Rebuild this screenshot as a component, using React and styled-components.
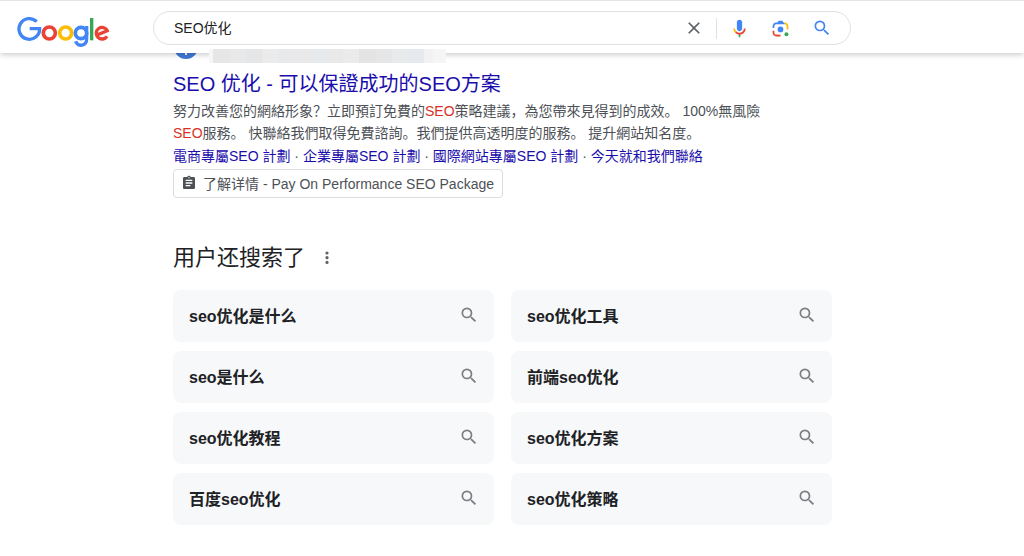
import React, { useState } from "react";
import styled, { createGlobalStyle } from "styled-components";

const GlobalStyle = createGlobalStyle`
  *, *::before, *::after { box-sizing: border-box; }
  body {
    margin: 0;
    background: #fff;
    color: #202124;
    font-family: "Liberation Sans", Arial, "Noto Sans CJK SC", sans-serif;
    font-size: 14px;
  }
  h2, h3, p { margin: 0; font-weight: 400; }
  a { color: #1a0dab; text-decoration: none; }
  a:hover { text-decoration: underline; }
  button { font: inherit; border: 0; padding: 0; background: none; cursor: pointer; }
  svg { display: block; }
`;

const Header = styled.header`
  position: relative;
  z-index: 1;
  display: flex;
  align-items: flex-start;
  height: 53px;
  padding: 10px 17px 0;
  background: #fff;
  border-top: 1px solid #e4e4e4;
  box-shadow: 0 1px 6px rgba(32, 33, 36, 0.28);
`;

const LogoLink = styled.a`
  flex: none;
  width: 136px;
  padding-top: 5px;
`;

const SearchBox = styled.form`
  display: flex;
  align-items: center;
  flex: 1;
  max-width: 698px;
  height: 34px;
  padding: 0 8px 0 20px;
  border: 1px solid #dfe1e5;
  border-radius: 17px;
`;

const SearchInput = styled.input`
  flex: 1;
  min-width: 0;
  height: 30px;
  padding: 0 0 2px;
  border: 0;
  outline: 0;
  background: none;
  color: #202124;
  font: inherit;
`;

const IconButton = styled.button`
  display: flex;
  align-items: center;
  justify-content: center;
  width: 41px;
  height: 32px;
  color: ${(p) => p.$color || "inherit"};
`;

const Divider = styled.span`
  width: 1px;
  height: 21px;
  margin: 0 2px;
  background: #dfe1e5;
`;

const Main = styled.main`
  max-width: 1005px;
  padding: 0 0 24px 173px;
`;

const Column = styled.div`
  max-width: 659px;
`;

const SourceRow = styled.div`
  display: flex;
  align-items: flex-end;
  gap: 10px;
  height: 28px;
  margin-top: -18px;
`;

const Favicon = styled.span`
  display: flex;
  align-items: flex-end;
  justify-content: center;
  align-self: flex-start;
  width: 26px;
  height: 24px;
`;

const Mosaic = styled.span`
  position: relative;
  z-index: 2;
  display: flex;
  width: 237px;
  height: 14px;
  background: #f3f3f3;
`;

const Tile = styled.span`
  flex: ${(p) => p.$span};
  background: ${(p) => p.$tone};
`;

const Title = styled.h3`
  margin-top: 8px;
  font-size: 20px;
  line-height: 26px;
`;

const Description = styled.p`
  margin-top: 3px;
  color: #4d5156;
  line-height: 22px;
`;

const Match = styled.em`
  color: #d93025;
  font-style: normal;
`;

const SiteLinks = styled.nav`
  color: #4d5156;
  line-height: 24px;
`;

const DetailButton = styled.button`
  display: flex;
  align-items: center;
  gap: 6px;
  height: 29px;
  margin-top: 1px;
  padding: 0 8px 2px 7px;
  border: 1px solid #dadce0;
  border-radius: 4px;
  color: #4d5156;
  white-space: nowrap;
`;

const Related = styled.section`
  margin-top: 44px;
`;

const RelatedHeader = styled.div`
  display: flex;
  align-items: center;
  gap: 12px;
  height: 32px;
`;

const RelatedTitle = styled.h2`
  font-size: 22px;
  line-height: 32px;
`;

const MenuButton = styled.button`
  display: flex;
  align-items: center;
  justify-content: center;
  width: 20px;
  height: 20px;
  color: #5f6368;
`;

const Grid = styled.div`
  display: grid;
  grid-template-columns: 1fr 1fr;
  gap: 9px 17px;
  margin-top: 16px;
`;

const Card = styled.a`
  display: flex;
  align-items: center;
  justify-content: space-between;
  height: 52px;
  padding: 0 15px 2px 16px;
  border-radius: 8px;
  background: #f7f8fa;
  color: #202124;
  font-size: 16px;
  font-weight: 700;

  svg { color: #7b7d80; }
`;

const Logo = () => (
  <svg width="92" height="32" viewBox="51 48 276 96" fill="none" strokeWidth="10" role="img" aria-label="Google">
    <path d="M110 65A31 31 0 1 0 119 86H89" stroke="#4285f4" />
    <circle cx="148" cy="99" r="18" stroke="#ea4335" strokeWidth="11" />
    <circle cx="197" cy="99" r="18" stroke="#fbbc05" strokeWidth="11" />
    <circle cx="243" cy="99" r="17" stroke="#4285f4" strokeWidth="11" />
    <path d="M260 78V117C260 140 232 141 227 124" stroke="#4285f4" />
    <path d="M275 54V121" stroke="#34a853" />
    <path d="M289 106L322 92A17.5 17.5 0 1 0 321 109" stroke="#ea4335" />
  </svg>
);

const SearchIcon = () => (
  <svg width="20" height="20" viewBox="0 0 24 24" fill="currentColor">
    <path d="M15.5 14h-.79l-.28-.27A6.471 6.471 0 0 0 16 9.5 6.5 6.5 0 1 0 9.5 16c1.61 0 3.09-.59 4.23-1.57l.27.28v.79l5 4.99L20.49 19l-4.99-5zm-6 0C7.01 14 5 11.99 5 9.5S7.01 5 9.5 5 14 7.01 14 9.5 11.99 14 9.5 14z" />
  </svg>
);

const CloseIcon = () => (
  <svg width="20" height="20" viewBox="0 0 24 24" fill="currentColor">
    <path d="M19 6.41L17.59 5 12 10.59 6.41 5 5 6.41 10.59 12 5 17.59 6.41 19 12 13.41 17.59 19 19 17.59 13.41 12z" />
  </svg>
);

const MicIcon = () => (
  <svg width="21" height="21" viewBox="0 0 24 24">
    <path fill="#4285f4" d="M12 15c1.66 0 3-1.31 3-2.97V5.01C15 3.35 13.66 2 12 2S9 3.34 9 5.01v7.02C9 13.69 10.34 15 12 15z" />
    <path fill="#34a853" d="M11 18.08h2V22h-2z" />
    <path fill="#fbbc04" d="M7.05 16.87C5.78 15.54 5 14.04 5 12h2c0 1.45.56 2.42 1.47 3.38v.32l-1.15 1.18z" />
    <path fill="#ea4335" d="M12 16.93a4.97 5.25 0 0 1-3.54-1.55l-1.41 1.49C8.31 18.21 10.07 19 12 19c3.87 0 6.99-2.92 6.99-7H17c0 2.92-2.24 4.93-5 4.93z" />
  </svg>
);

const LensIcon = () => (
  <svg width="21" height="21" viewBox="0 0 192 192">
    <circle fill="#34a853" cx="150" cy="148" r="18" />
    <circle fill="#4285f4" cx="96" cy="104" r="26" />
    <path fill="#ea4335" d="M24 135.2C24 153.31 38.69 168 56.8 168H96v-16l-40.1-.1c-8.8 0-15.9-8.19-15.9-17.9v-18H24z" />
    <path fill="#fbbc04" d="M168 72.8C168 54.69 153.31 40 135.2 40H116l20 16c8.8 0 15.9 8.29 15.9 18v30h16z" />
    <path fill="#4285f4" d="M112 24H80L68 40H56.8C38.69 40 24 54.69 24 72.8V92h16V74c0-9.71 7.1-18 15.9-18h80.2z" />
  </svg>
);

const ClipboardIcon = () => (
  <svg width="16" height="16" viewBox="0 0 24 24" fill="currentColor">
    <path d="M19 3h-4.18C14.4 1.84 13.3 1 12 1s-2.4.84-2.82 2H5c-1.1 0-2 .9-2 2v14c0 1.1.9 2 2 2h14c1.1 0 2-.9 2-2V5c0-1.1-.9-2-2-2zm-7 0c.55 0 1 .45 1 1s-.45 1-1 1-1-.45-1-1 .45-1 1-1zm2 14H7v-2h7v2zm3-4H7v-2h10v2zm0-4H7V7h10v2z" />
  </svg>
);

const DotsIcon = () => (
  <svg width="20" height="20" viewBox="0 0 20 20" fill="currentColor">
    <circle cx="10" cy="5" r="1.6" />
    <circle cx="10" cy="9.7" r="1.6" />
    <circle cx="10" cy="14.4" r="1.6" />
  </svg>
);

const tiles = [
  [4, "#f6f6f6"], [15, "#e6e6e6"], [15, "#e9e9ea"], [15, "#e5e6e8"], [15, "#ebebeb"],
  [15, "#e8e9ea"], [15, "#e9e9e9"], [15, "#e7eaec"], [15, "#e9e9e9"], [15, "#ebebeb"],
  [15, "#e4e4e4"], [15, "#e6e6e6"], [15, "#e9eaec"], [15, "#e6e9ed"], [8, "#f2f2f2"], [12, "#f5f5f5"],
];

const siteLinks = ["電商專屬SEO 計劃", "企業專屬SEO 計劃", "國際網站專屬SEO 計劃", "今天就和我們聯絡"];

const related = [
  "seo优化是什么", "seo优化工具",
  "seo是什么", "前端seo优化",
  "seo优化教程", "seo优化方案",
  "百度seo优化", "seo优化策略",
];

export default function App() {
  const [query, setQuery] = useState("SEO优化");
  return (
    <>
      <GlobalStyle />
      <Header>
        <LogoLink href="#"><Logo /></LogoLink>
        <SearchBox role="search" onSubmit={(e) => e.preventDefault()}>
          <SearchInput aria-label="搜索" value={query} onChange={(e) => setQuery(e.target.value)} />
          <IconButton type="button" aria-label="清除" $color="#5f6368" onClick={() => setQuery("")}>
            <CloseIcon />
          </IconButton>
          <Divider />
          <IconButton type="button" aria-label="语音搜索"><MicIcon /></IconButton>
          <IconButton type="button" aria-label="图片搜索"><LensIcon /></IconButton>
          <IconButton type="submit" aria-label="搜索" $color="#4285f4"><SearchIcon /></IconButton>
        </SearchBox>
      </Header>
      <Main>
        <Column>
          <article>
            <SourceRow>
              <Favicon>
                <svg width="24" height="24" viewBox="0 0 24 24">
                  <circle cx="12" cy="12" r="12" fill="#3c78d8" />
                  <path d="M12 17v3" stroke="#fff" strokeWidth="2" />
                </svg>
              </Favicon>
              <Mosaic>
                {tiles.map(([span, tone], i) => <Tile key={i} $span={span} $tone={tone} />)}
              </Mosaic>
            </SourceRow>
            <Title><a href="#">SEO 优化 - 可以保證成功的SEO方案</a></Title>
            <Description>
              努力改善您的網絡形象？立即預訂免費的<Match>SEO</Match>策略建議，為您帶來見得到的成效。 100%無風險
              <br />
              <Match>SEO</Match>服務。 快聯絡我們取得免費諮詢。我們提供高透明度的服務。 提升網站知名度。
            </Description>
            <SiteLinks>
              {siteLinks.map((label, i) => (
                <React.Fragment key={label}>
                  {i > 0 && " · "}
                  <a href="#">{label}</a>
                </React.Fragment>
              ))}
            </SiteLinks>
            <DetailButton type="button">
              <ClipboardIcon />
              了解详情 - Pay On Performance SEO Package
            </DetailButton>
          </article>
          <Related>
            <RelatedHeader>
              <RelatedTitle>用户还搜索了</RelatedTitle>
              <MenuButton type="button" aria-label="更多"><DotsIcon /></MenuButton>
            </RelatedHeader>
            <Grid>
              {related.map((label) => (
                <Card href="#" key={label}>
                  {label}
                  <SearchIcon />
                </Card>
              ))}
            </Grid>
          </Related>
        </Column>
      </Main>
    </>
  );
}
